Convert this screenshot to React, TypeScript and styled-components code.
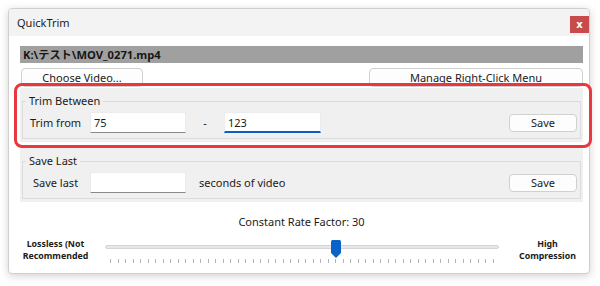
import styled, { createGlobalStyle } from "styled-components";

const GlobalStyle = createGlobalStyle`
  html, body {
    margin: 0;
    background: #ffffff;
  }
  body {
    font-family: "Noto Sans", "Segoe UI", sans-serif;
    color: #1b1b1b;
  }
`;

const Page = styled.div`
  position: relative;
  width: 600px;
  height: 286px;
  padding: 8px 0 0 8px;
  box-sizing: border-box;
`;

const Window = styled.div`
  width: 582px;
  height: 266px;
  box-sizing: border-box;
  border: 1px solid #cfcfcf;
  border-radius: 4px;
  background: #ffffff;
  box-shadow: 0 2px 8px rgba(0, 0, 0, 0.18);
  overflow: hidden;
  display: flex;
  flex-direction: column;
`;

const TitleBar = styled.div`
  height: 27px;
  flex-shrink: 0;
  background: #f3f3f3;
  display: flex;
  justify-content: space-between;
  align-items: flex-start;
  padding-left: 8px;
`;

const Title = styled.span`
  margin-top: 7px;
  font-size: 11px;
  line-height: 14px;
`;

const CloseButton = styled.button`
  margin-top: 7px;
  width: 19px;
  height: 17px;
  padding: 0;
  border: none;
  background: #c84a4a;
  color: #ffffff;
  font-family: "DejaVu Sans", sans-serif;
  font-weight: bold;
  font-size: 10px;
  line-height: 17px;
`;

const Body = styled.div`
  display: flex;
  flex-direction: column;
  padding: 10px 6px 0 11px;
`;

const FileBar = styled.div`
  height: 17px;
  background: #a0a0a0;
  padding-left: 3px;
  font-family: "Noto Sans", "Noto Sans CJK JP", sans-serif;
  font-weight: bold;
  font-size: 11.2px;
  line-height: 17px;
  color: #161616;
`;

const ButtonRow = styled.div`
  margin-top: 5px;
  display: flex;
  justify-content: space-between;
`;

const WinButton = styled.button<{ $width: number; $height?: number }>`
  width: ${(p) => p.$width}px;
  height: ${(p) => p.$height ?? 19}px;
  padding: 0;
  border: 1px solid #d0d0d0;
  border-radius: 4px;
  background: #fdfdfd;
  font-family: "Noto Sans", sans-serif;
  font-size: 11px;
  line-height: 14px;
  color: #1b1b1b;
`;

const Group = styled.div<{ $gap: number }>`
  margin-top: ${(p) => p.$gap}px;
  height: 54px;
  box-sizing: border-box;
  background: #f0f0f0;
  padding: 6px 2px 2px 2px;
`;

const Frame = styled.fieldset`
  margin: 0;
  padding: 0 3px 5px 3px;
  border: 1px solid #dcdcdc;
  min-width: 0;
`;

const Legend = styled.legend`
  padding: 0 3px;
  font-size: 11px;
  line-height: 14px;
`;

const Row = styled.div`
  margin-top: 4px;
  height: 21px;
  display: flex;
  align-items: center;
`;

const FieldLabel = styled.span<{ $indent: number; $width: number }>`
  margin-left: ${(p) => p.$indent}px;
  width: ${(p) => p.$width}px;
  font-size: 11px;
  line-height: 14px;
`;

const TextBox = styled.input<{ $width: number; $focused?: boolean }>`
  width: ${(p) => p.$width}px;
  height: 21px;
  box-sizing: border-box;
  padding: 0 3px;
  border: 1px solid #ececec;
  border-bottom: ${(p) => (p.$focused ? "2px solid #0a5fc4" : "1px solid #8a8a8a")};
  background: #ffffff;
  font-family: "Noto Sans", sans-serif;
  font-size: 11px;
  color: #1b1b1b;
  outline: none;
`;

const Dash = styled.span`
  width: 38px;
  text-align: center;
  font-size: 11px;
`;

const Suffix = styled.span`
  margin-left: 13px;
  font-size: 11px;
`;

const RowSpacer = styled.div`
  flex: 1;
`;

const RateLabel = styled.div`
  margin-top: 13px;
  text-align: center;
  font-size: 11px;
  line-height: 14px;
`;

const SliderRow = styled.div`
  margin-top: 9px;
  display: flex;
  align-items: flex-start;
`;

const EndLabel = styled.div<{ $gap: number }>`
  margin-left: ${(p) => p.$gap}px;
  width: 71px;
  text-align: center;
  font-weight: bold;
  font-size: 8.8px;
  line-height: 12px;
  white-space: nowrap;
`;

const Slider = styled.div`
  position: relative;
  margin-left: 14px;
  width: 394px;
  height: 26px;
`;

const Track = styled.div`
  margin-top: 7px;
  height: 4px;
  box-sizing: border-box;
  border: 1px solid #d4d4d4;
  border-radius: 2px;
  background: #e7e7e7;
`;

const Ticks = styled.div`
  margin-top: 10px;
  padding: 0 5px;
  display: flex;
  justify-content: space-between;
`;

const Tick = styled.div`
  width: 1px;
  height: 4px;
  background: #b4b4b4;
`;

const Thumb = styled.svg`
  position: absolute;
  top: 2px;
`;

const Highlight = styled.div`
  position: absolute;
  left: 14px;
  top: 83px;
  width: 578px;
  height: 65px;
  box-sizing: border-box;
  border: 3px solid #e8383d;
  border-radius: 8px;
  pointer-events: none;
`;

const MAX = 51;
const VALUE = 30;
const TICK_SPAN = 384;

export default function App() {
  const thumbLeft = (VALUE / MAX) * TICK_SPAN + 0.5;
  return (
    <Page>
      <GlobalStyle />
      <Window>
        <TitleBar>
          <Title>QuickTrim</Title>
          <CloseButton>x</CloseButton>
        </TitleBar>
        <Body>
          <FileBar>K:\テスト\MOV_0271.mp4</FileBar>
          <ButtonRow>
            <WinButton $width={122} style={{ marginLeft: 1 }}>Choose Video...</WinButton>
            <WinButton $width={214}>Manage Right-Click Menu</WinButton>
          </ButtonRow>
          <Group $gap={1}>
            <Frame>
              <Legend>Trim Between</Legend>
              <Row>
                <FieldLabel $indent={4} $width={60}>Trim from</FieldLabel>
                <TextBox $width={96} defaultValue="75" />
                <Dash>-</Dash>
                <TextBox $width={97} defaultValue="123" $focused />
                <RowSpacer />
                <WinButton $width={68} $height={18}>Save</WinButton>
              </Row>
            </Frame>
          </Group>
          <Group $gap={6}>
            <Frame>
              <Legend>Save Last</Legend>
              <Row>
                <FieldLabel $indent={7} $width={57}>Save last</FieldLabel>
                <TextBox $width={96} defaultValue="" />
                <Suffix>seconds of video</Suffix>
                <RowSpacer />
                <WinButton $width={68} $height={18}>Save</WinButton>
              </Row>
            </Frame>
          </Group>
          <RateLabel>Constant Rate Factor: {VALUE}</RateLabel>
          <SliderRow>
            <EndLabel $gap={0}>
              Lossless (Not
              <br />
              Recommended
            </EndLabel>
            <Slider>
              <Track />
              <Ticks>
                {Array.from({ length: MAX + 1 }, (_, i) => (
                  <Tick key={i} />
                ))}
              </Ticks>
              <Thumb
                width="10"
                height="18"
                viewBox="0 0 10 18"
                style={{ left: thumbLeft }}
              >
                <path d="M1.5 0 H8.5 Q10 0 10 1.5 V13 L5 18 L0 13 V1.5 Q0 0 1.5 0 Z" fill="#0a63c7" />
              </Thumb>
            </Slider>
            <EndLabel $gap={13}>
              High
              <br />
              Compression
            </EndLabel>
          </SliderRow>
        </Body>
      </Window>
      <Highlight />
    </Page>
  );
}
